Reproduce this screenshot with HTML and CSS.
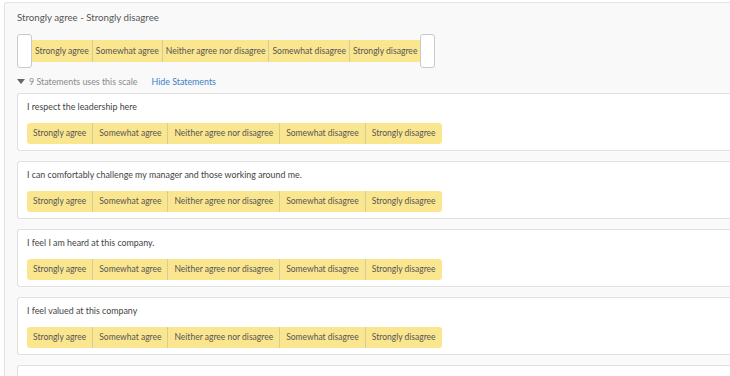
FILE: index.html
```html
<!DOCTYPE html>
<html>
<head>
  <meta charset="utf-8" />
  <title>Scale statements</title>
  <link rel="stylesheet" href="styles.css">
</head>
<body>
  <div class="panel">
    <div class="title">Strongly agree - Strongly disagree</div>
    <div class="scale">
      <span class="end"></span>
      <div class="bar">
        <span>Strongly agree</span>
        <span>Somewhat agree</span>
        <span>Neither agree nor disagree</span>
        <span>Somewhat disagree</span>
        <span>Strongly disagree</span>
      </div>
      <span class="end"></span>
    </div>
    <div class="toggle">
      <span class="caret"></span>
      <span class="count">9 Statements uses this scale</span>
      <a class="hide" href="#">Hide Statements</a>
    </div>

    <div class="card">
      <p>I respect the leadership here</p>
      <div class="options">
        <span>Strongly agree</span><span>Somewhat agree</span><span>Neither agree nor disagree</span><span>Somewhat disagree</span><span>Strongly disagree</span>
      </div>
    </div>
    <div class="card">
      <p>I can comfortably challenge my manager and those working around me.</p>
      <div class="options">
        <span>Strongly agree</span><span>Somewhat agree</span><span>Neither agree nor disagree</span><span>Somewhat disagree</span><span>Strongly disagree</span>
      </div>
    </div>
    <div class="card">
      <p>I feel I am heard at this company.</p>
      <div class="options">
        <span>Strongly agree</span><span>Somewhat agree</span><span>Neither agree nor disagree</span><span>Somewhat disagree</span><span>Strongly disagree</span>
      </div>
    </div>
    <div class="card">
      <p>I feel valued at this company</p>
      <div class="options">
        <span>Strongly agree</span><span>Somewhat agree</span><span>Neither agree nor disagree</span><span>Somewhat disagree</span><span>Strongly disagree</span>
      </div>
    </div>
    <div class="card"></div>
  </div>
</body>
</html>
```

FILE: styles.css
```css
html, body {
  margin: 0;
  padding: 0;
  background: #fff;
  overflow: hidden;
}
body {
  font-family: Lato, "Open Sans", "Liberation Sans", sans-serif;
  color: #555;
}
/* outer scale panel */
.panel {
  margin: 2px 0 0 4px;
  padding: 8px 0 0 12px;
  border: 1px solid #e3e3e3;
  border-right: none;
  border-radius: 3px 0 0 0;
  background: #f9f9f9;
}
.title {
  font-size: 9.7px;
  line-height: 12px;
  margin-bottom: 11px;
}
.scale {
  display: flex;
  align-items: center;
  height: 34px;
}
.end {
  width: 13px;
  height: 32px;
  border: 1px solid #c9c9c9;
  border-radius: 3px;
  background: #fff;
}
.bar {
  display: flex;
  height: 22px;
  background: #fbe690;
}
.bar span {
  padding: 0 3px;
  font-size: 8.6px;
  line-height: 22px;
  border-left: 1px solid #d5cb9c;
}
.bar span:first-child {
  border-left: none;
}
/* statements toggle */
.toggle {
  display: flex;
  align-items: center;
  margin: 7px 0 6px;
  height: 12px;
  font-size: 8.85px;
}
.caret {
  width: 0;
  height: 0;
  border-left: 4px solid transparent;
  border-right: 4px solid transparent;
  border-top: 5px solid #666;
  margin-right: 4px;
}
.count {
  color: #8a8a8a;
}
.hide {
  margin-left: 14px;
  color: #3b7fc4;
  text-decoration: none;
}
/* statement cards */
.card {
  height: 40px;
  margin-bottom: 10px;
  padding: 7px 0 9px 9px;
  border: 1px solid #e1e1e1;
  border-right: none;
  border-radius: 3px 0 0 3px;
  background: #fff;
}
.card p {
  margin: 0 0 7px;
  font-size: 8.85px;
  line-height: 12px;
  color: #444;
}
.options {
  display: inline-flex;
  height: 21px;
  border-radius: 3px;
  background: #fbe690;
  overflow: hidden;
}
.options span {
  padding: 0 6px;
  font-size: 8.5px;
  line-height: 21px;
  border-left: 1px solid #d5cb9c;
}
.options span:first-child {
  border-left: none;
}
```
